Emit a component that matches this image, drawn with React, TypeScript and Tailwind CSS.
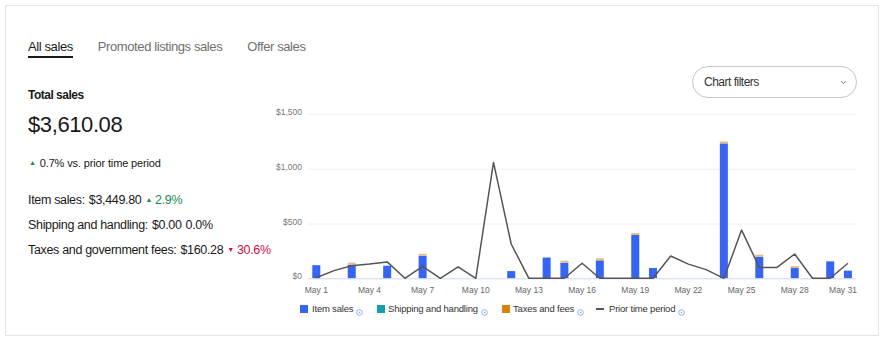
import { ChevronDown } from "lucide-react";

const DAY_X0 = 43.3;
const DAY_W = 17.72;
const ZERO_Y = 180.3;
const SCALE = 0.10933;

const prior = [5, 70, 115, 130, 150, 0, 110, 0, 105, 0, 1060, 314, 0, 0, 0, 137, 0, 0, 0, 0, 204, 130, 80, 0, 441, 100, 100, 222, 0, 0, 137];

const bars: { d: number; v: number; tax?: number }[] = [
  { d: 1, v: 120 },
  { d: 3, v: 125, tax: 12 },
  { d: 5, v: 115 },
  { d: 7, v: 205, tax: 15 },
  { d: 12, v: 66 },
  { d: 14, v: 190 },
  { d: 15, v: 143, tax: 12 },
  { d: 17, v: 164, tax: 12 },
  { d: 19, v: 396, tax: 18 },
  { d: 20, v: 94 },
  { d: 24, v: 1234, tax: 15 },
  { d: 26, v: 198, tax: 15 },
  { d: 28, v: 94, tax: 18 },
  { d: 30, v: 155 },
  { d: 31, v: 70 },
];

const grid = [
  { label: "$1,500", y: 16.3 },
  { label: "$1,000", y: 71.3 },
  { label: "$500", y: 126 },
];

const xLabels = [1, 4, 7, 10, 13, 16, 19, 22, 25, 28, 31];

const dx = (d: number) => DAY_X0 + (d - 1) * DAY_W;
const vy = (v: number) => ZERO_Y - v * SCALE;

function Info() {
  return (
    <svg width="7" height="7" viewBox="0 0 7 7" className="ml-[3px] mt-[6px] shrink-0">
      <circle cx="3.5" cy="3.5" r="2.8" fill="none" stroke="#8aa4f0" strokeWidth="0.9" />
      <circle cx="3.5" cy="3.5" r="0.8" fill="#8aa4f0" />
    </svg>
  );
}

function SalesChart() {
  const points = prior.map((v, i) => `${dx(i + 1).toFixed(1)},${vy(v).toFixed(1)}`).join(" ");
  return (
    <svg width="584" height="198" viewBox="0 0 584 198" className="block" style={{ fontFamily: '"Liberation Sans", Arial, sans-serif' }}>
      {grid.map((g) => (
        <g key={g.label}>
          <line x1="35" x2="583" y1={g.y} y2={g.y} stroke="#f0f0f0" strokeWidth="1" />
          <text x="29" y={g.y + 1} textAnchor="end" fontSize="8.5" fill="#777">
            {g.label}
          </text>
        </g>
      ))}
      <text x="29" y={ZERO_Y + 0.5} textAnchor="end" fontSize="8.5" fill="#777">
        $0
      </text>

      {bars.map((b) => {
        const x = dx(b.d) - 4;
        const top = vy(b.v);
        return (
          <g key={b.d}>
            <rect x={x} y={top} width="8" height={ZERO_Y - top} fill="#3665f3" />
            {b.tax ? <rect x={x} y={top - 2} width="8" height="2" fill="#e8bd85" /> : null}
          </g>
        );
      })}

      <line x1="35" x2="583" y1={ZERO_Y + 0.5} y2={ZERO_Y + 0.5} stroke="#ccd6eb" strokeWidth="1" />

      <polyline points={points} fill="none" stroke="#555" strokeWidth="1.5" strokeLinejoin="round" />

      {xLabels.map((d) => (
        <text key={d} x={Math.min(dx(d), 570)} y="194.5" textAnchor="middle" fontSize="8.5" fill="#666">
          May {d}
        </text>
      ))}
    </svg>
  );
}

export default function App() {
  return (
    <div className="w-[885px] h-[340px] bg-white p-[5px]" style={{ fontFamily: '"Liberation Sans", Arial, sans-serif' }}>
      <div className="w-[874px] h-[331px] border border-[#e5e5e5] pt-[33px] pl-[22px] pr-[21px] text-[#191919]">
        {/* tabs */}
        <div className="flex gap-[25px] text-[13px] leading-[16px] tracking-[-0.4px]">
          <div className="pb-[1px] border-b-2 border-[#191919] text-[#191919]">All sales</div>
          <div className="pb-[1px] border-b-2 border-transparent text-[#707070]">Promoted listings sales</div>
          <div className="pb-[1px] border-b-2 border-transparent text-[#707070]">Offer sales</div>
        </div>

        <div className="flex mt-[8px]">
          {/* summary */}
          <div className="w-[245px] shrink-0">
            <div className="mt-[21px] text-[12px] leading-[16px] font-bold tracking-[-0.5px]">Total sales</div>
            <div className="mt-[8px] text-[22px] leading-[28px] tracking-[-0.4px]">$3,610.08</div>
            <div className="mt-[17px] flex items-center text-[11px] leading-[14px] tracking-[-0.15px]">
              <span className="text-[#1e8a4c] text-[7px] ml-[1px] mr-[4px]">▲</span>
              <span className="font-medium">0.7%</span>
              <span className="ml-[3px]">vs. prior time period</span>
            </div>
            <div className="mt-[18px] text-[12.5px] tracking-[-0.33px]">
              <div className="h-[25px] flex items-center">
                <span>Item sales:</span>
                <span className="ml-[4px] font-medium">$3,449.80</span>
                <span className="ml-[4px] text-[#1e8a4c] text-[7px]">▲</span>
                <span className="ml-[3px] text-[#1e8a4c]">2.9%</span>
              </div>
              <div className="h-[25px] flex items-center">
                <span>Shipping and handling:</span>
                <span className="ml-[4px] font-medium">$0.00</span>
                <span className="ml-[4px]">0.0%</span>
              </div>
              <div className="h-[25px] flex items-center">
                <span>Taxes and government fees:</span>
                <span className="ml-[4px] font-medium">$160.28</span>
                <span className="ml-[4px] text-[#d50b3f] text-[7px]">▼</span>
                <span className="ml-[3px] text-[#d50b3f]">30.6%</span>
              </div>
            </div>
          </div>

          {/* chart */}
          <div className="flex-1 flex flex-col">
            <div className="self-end w-[165px] h-[32px] rounded-full border border-[#c7c7c7] flex items-center justify-between pl-[11px] pr-[8px]">
              <span className="text-[12px] tracking-[-0.5px] text-[#333]">Chart filters</span>
              <ChevronDown className="w-[9px] h-[9px] text-[#555]" strokeWidth={2} />
            </div>
            <SalesChart />
            <div className="mt-[7px] flex items-start text-[9.5px] leading-[12px] text-[#333] tracking-[-0.2px] pl-[27px]">
              <div className="w-[77px] flex items-start">
                <span className="w-[8px] h-[8px] mt-[2px] mr-[4px] bg-[#3665f3]" />
                <span>Item sales</span>
                <Info />
              </div>
              <div className="w-[125px] flex items-start">
                <span className="w-[8px] h-[8px] mt-[2px] mr-[3px] bg-[#14a0a8]" />
                <span>Shipping and handling</span>
                <Info />
              </div>
              <div className="w-[94px] flex items-start">
                <span className="w-[8px] h-[8px] mt-[2px] mr-[3px] bg-[#d6820c]" />
                <span>Taxes and fees</span>
                <Info />
              </div>
              <div className="flex items-start">
                <span className="w-[8px] h-[2px] mt-[5px] mr-[5px] bg-[#555]" />
                <span>Prior time period</span>
                <Info />
              </div>
            </div>
          </div>
        </div>
      </div>
    </div>
  );
}
